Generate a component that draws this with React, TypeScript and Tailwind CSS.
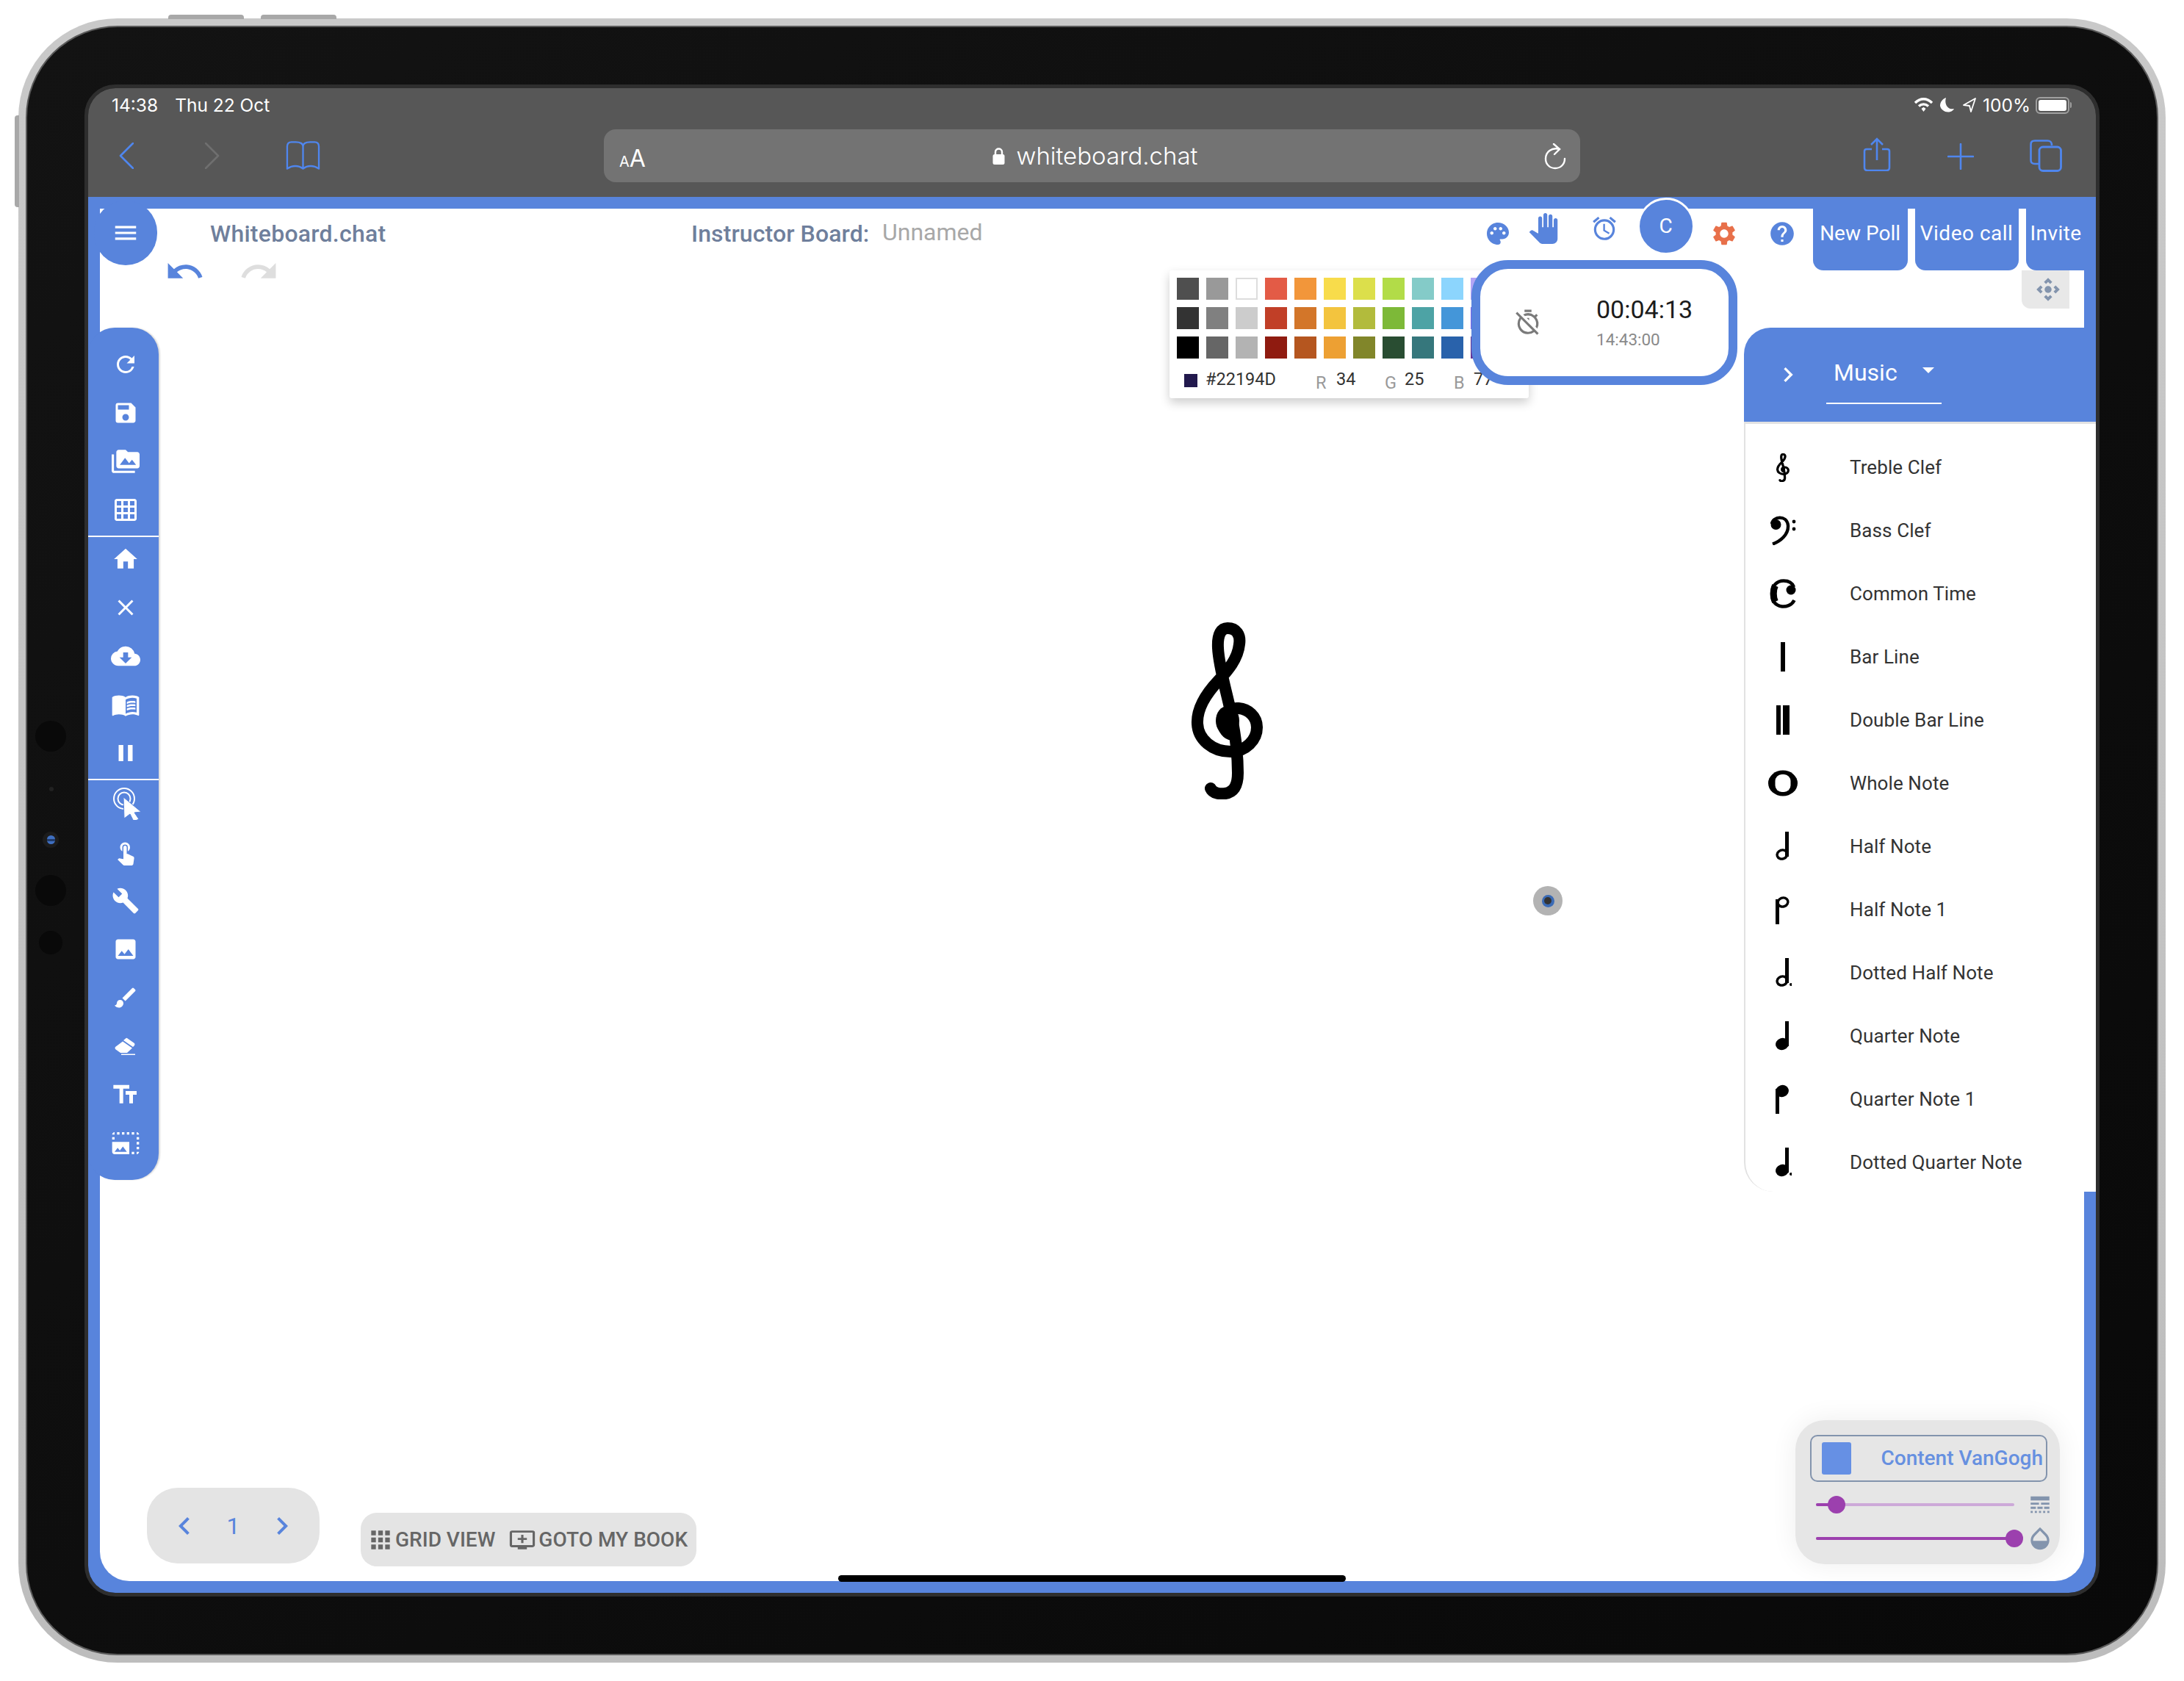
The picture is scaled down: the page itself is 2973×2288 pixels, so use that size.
import {
  MdAddToQueue, MdApps, MdBrush, MdBuild, MdChevronLeft, MdChevronRight, MdClose, MdCloudDownload, MdControlCamera,
  MdFormatSize, MdGridOn, MdHelp, MdHome, MdImage, MdLineStyle, MdMenu, MdMenuBook, MdOpacity, MdOutlineAccessAlarm,
  MdOutlineTimerOff, MdPalette, MdPanTool, MdPause, MdPermMedia, MdPhotoSizeSelectLarge, MdRedo, MdRefresh, MdSave,
  MdSettings, MdTouchApp, MdUndo,
} from "react-icons/md";

const SWATCHES = [
  ["#4f4f4f", "#999999", "#ffffff", "#e35b46", "#f2963a", "#f8dc4b", "#dcdf4b", "#b2dc48", "#84cbc8", "#8cd5fd", "#b3a4f5"],
  ["#333333", "#808080", "#cccccc", "#c13f27", "#d37629", "#f3c43e", "#b2bb3c", "#7db938", "#4da3a5", "#4496d9", "#7b64e8"],
  ["#000000", "#666666", "#b3b3b3", "#8f1b10", "#b5561f", "#eda033", "#81862a", "#294d32", "#36777c", "#2962ab", "#653294"],
];

function TrebleClef({ className, strokeWidth = 16 }: { className: string; strokeWidth?: number }) {
  return (
    <svg viewBox="0 0 99 241" preserveAspectRatio="none" className={className}>
      <path
        d="M27 226 C30 233 40 234 47 233 C60 231 64 220 64 205 C64 180 60 150 55 125 C50 100 38 60 37 35 C36 15 42 8 50 8 C62 8 68 17 66 30 C64 50 50 66 38 79 C20 98 8 118 9 138 C10 160 30 176 54 176 C75 176 90 160 90 143 C90 128 78 118 65 117 C52 116 44 125 44 136 C44 146 50 152 56 153"
        fill="none"
        stroke="#000"
        strokeWidth={strokeWidth}
        strokeLinecap="round"
      />
      <ellipse cx="50" cy="134" rx="16" ry="20" fill="#000" />
    </svg>
  );
}

// note glyphs for the Music list, all on a 40x40 box
function NoteIcon({ name }: { name: string }) {
  switch (name) {
    case "Treble Clef":
      return <TrebleClef className="h-[39px] w-[18px]" strokeWidth={18} />;
    case "Bass Clef":
      return (
        <svg viewBox="0 0 36 40" className="h-[40px] w-[36px]">
          <path d="M3 11 C4 1 23 -2 25 13 C26 26 14 35 4 38.5" fill="none" stroke="#000" strokeWidth="4.4" />
          <circle cx="8.5" cy="12" r="7" fill="#000" />
          <circle cx="33" cy="8" r="2.4" fill="#000" />
          <circle cx="33" cy="18" r="2.4" fill="#000" />
        </svg>
      );
    case "Common Time":
      return (
        <svg viewBox="0 0 36 40" className="h-[40px] w-[36px]">
          <path d="M33.5 29 C30 36 22 38 17 37.5 C7 36 3 29 3 20 C3 10 9 2.5 19 2.5 C26 2.5 31 6 33 11" fill="none" stroke="#000" strokeWidth="4.5" />
          <path d="M7.5 9 C4.5 15 4.5 25 7.5 31" fill="none" stroke="#000" strokeWidth="9" />
          <circle cx="29" cy="15" r="6.5" fill="#000" />
        </svg>
      );
    case "Bar Line":
      return <div className="h-[40px] w-[6px] bg-black" />;
    case "Double Bar Line":
      return (
        <div className="flex h-[40px] gap-[3px]">
          <div className="w-[6px] bg-black" />
          <div className="w-[9px] bg-black" />
        </div>
      );
    case "Whole Note":
      return (
        <svg viewBox="0 0 40 36" className="h-[36px] w-[40px]">
          <ellipse cx="20" cy="18" rx="20" ry="17.5" fill="#000" />
          <rect x="9.5" y="6" width="21" height="24" rx="9" fill="#fff" />
        </svg>
      );
  }
  const filled = name.startsWith("Quarter") || name === "Dotted Quarter Note";
  const flipped = name.endsWith(" 1");
  const dotted = name.startsWith("Dotted");
  if (flipped) {
    return (
      <svg viewBox="0 0 24 40" className="h-[40px] w-[24px]">
        <rect x="2" y="6" width="5" height="34" fill="#000" />
        {filled ? (
          <ellipse cx="11" cy="9" rx="9" ry="8" fill="#000" transform="rotate(-20 11 9)" />
        ) : (
          <ellipse cx="12" cy="10" rx="7" ry="6" fill="none" stroke="#000" strokeWidth="3.4" transform="rotate(-20 12 10)" />
        )}
      </svg>
    );
  }
  return (
    <svg viewBox="0 0 24 40" className="h-[40px] w-[24px]">
      <rect x="15" y="0" width="5" height="34" fill="#000" />
      {filled ? (
        <ellipse cx="11" cy="31" rx="9" ry="8" fill="#000" transform="rotate(-20 11 31)" />
      ) : (
        <ellipse cx="11" cy="31" rx="7" ry="6" fill="none" stroke="#000" strokeWidth="3.4" transform="rotate(-20 11 31)" />
      )}
      {dotted && <circle cx="23" cy="36" r="2" fill="#000" />}
    </svg>
  );
}

function TouchCursor() {
  return (
    <svg viewBox="0 0 40 44" className="h-[44px] w-[40px] translate-x-[3px]">
      <circle cx="15" cy="15" r="14" fill="none" stroke="#fff" strokeWidth="2" />
      <circle cx="15" cy="15" r="8.5" fill="none" stroke="#fff" strokeWidth="2" />
      <path d="M14 13 L38 33 L29 34 L35 43 L28 46 L23 36 L15 42 Z" fill="#fff" stroke="#5884dc" strokeWidth="1" />
    </svg>
  );
}

function EraserIcon() {
  return (
    <svg viewBox="0 0 28 24" className="h-[24px] w-[28px] -translate-x-[1px]">
      <path d="M17 1 L27 8 Q28 9.5 27 11 L25 13 L12 4 L15 1.5 Q16 0.5 17 1 Z" fill="#fff" />
      <path d="M11 5.5 L24 14.5 L17 21 H8 L1 16 Q0 14 1 13 Z" fill="#fff" />
      <rect x="9" y="22.5" width="19" height="1.5" fill="#fff" />
    </svg>
  );
}

function StatusIcons() {
  return (
    <div className="flex items-center text-white">
      <svg viewBox="0 0 27 20" className="mr-[9px] h-[20px] w-[27px]">
        <path d="M2 7 C9 0 18 0 25 7" fill="none" stroke="#fff" strokeWidth="3.4" />
        <path d="M7 11.5 C11 8 16 8 20 11.5" fill="none" stroke="#fff" strokeWidth="3.4" />
        <path d="M10.5 15 L13.5 12.8 L16.5 15 L13.5 19 Z" fill="#fff" />
      </svg>
      <svg viewBox="0 0 19 20" className="mr-[12px] h-[20px] w-[19px]">
        <path d="M8 0 C3 2 0 6 0 11 C1 17 8 21 14 19 C16 18.5 18 17 19 15 C12 17 5 10 8 0 Z" fill="#fff" />
      </svg>
      <svg viewBox="0 0 18 20" className="mr-[9px] h-[20px] w-[18px]">
        <path d="M17 1 L1 10 L9 11 L11 19 Z" fill="none" stroke="#fff" strokeWidth="1.8" strokeLinejoin="round" />
      </svg>
      <span className="mr-[7px] font-['Inter',sans-serif] text-[24.5px] leading-none">100%</span>
      <div className="flex items-center">
        <div className="h-[23px] w-[46px] rounded-[6px] border-2 border-[#a0a0a0] p-[2px]">
          <div className="h-full w-full rounded-[3px] bg-white" />
        </div>
        <div className="ml-[1px] h-[8px] w-[2px] rounded-r bg-[#a0a0a0]" />
      </div>
    </div>
  );
}

function SafariBar() {
  return (
    <div className="h-[148px] shrink-0 bg-[#575757]">
      <div className="flex h-[56px] items-center justify-between pb-[10px] pl-[32px] pr-[33px] font-['Inter',sans-serif] text-[24.5px] text-white">
        <div className="flex gap-[23px]">
          <span>14:38</span>
          <span>Thu 22 Oct</span>
        </div>
        <StatusIcons />
      </div>
      <div className="flex h-[92px] items-start">
        <svg viewBox="0 0 20 36" className="ml-[42px] mt-[18px] h-[36px] w-[20px]">
          <path d="M19 1 L2 18 L19 35" fill="none" stroke="#4f86ee" strokeWidth="2.6" strokeLinecap="round" strokeLinejoin="round" />
        </svg>
        <svg viewBox="0 0 20 36" className="ml-[97px] mt-[18px] h-[36px] w-[20px]">
          <path d="M1 1 L18 18 L1 35" fill="none" stroke="#6f6f6f" strokeWidth="2.6" strokeLinecap="round" strokeLinejoin="round" />
        </svg>
        <svg viewBox="0 0 48 40" className="ml-[90px] mt-[16px] h-[40px] w-[47px]">
          <path
            d="M24 7 C24 3 20 1 14 1 L8 1 C4 1 2 3 2 7 L2 38 C9 33 18 33 24 38 C30 33 39 33 46 38 L46 7 C46 3 44 1 40 1 L34 1 C28 1 24 3 24 7 L24 38"
            fill="none"
            stroke="#4f86ee"
            strokeWidth="2.4"
            strokeLinejoin="round"
          />
        </svg>
        <div className="relative ml-[386px] flex h-[72px] w-[1329px] items-center justify-center rounded-[16px] bg-[#737373] pl-[8px] text-white">
          <div className="absolute left-[21px] top-[24px] flex items-baseline font-['Inter',sans-serif] leading-none">
            <span className="text-[20px]">A</span>
            <span className="text-[32px]">A</span>
          </div>
          <svg viewBox="0 0 17 24" className="mr-[16px] h-[24px] w-[17px]">
            <path d="M4 11 V7 C4 1 13 1 13 7 V11" fill="none" stroke="#fff" strokeWidth="2.4" />
            <rect x="0.5" y="10" width="16" height="14" rx="2.5" fill="#fff" />
          </svg>
          <span className="font-['Inter',sans-serif] text-[33px] font-light leading-none">whiteboard.chat</span>
          <svg viewBox="0 0 30 36" className="absolute right-[19px] top-[19px] h-[36px] w-[30px]">
            <path d="M21 8 C10 5 2 12 2 21 C2 29 8 34 15 34 C22 34 28 29 28 21" fill="none" stroke="#fff" strokeWidth="2.4" strokeLinecap="round" />
            <path d="M13 1 L21 8 L14 15" fill="none" stroke="#fff" strokeWidth="2.4" strokeLinecap="round" />
          </svg>
        </div>
        <svg viewBox="0 0 38 46" className="ml-[385px] mt-[11px] h-[46px] w-[38px]">
          <path d="M12 16 H5 C3 16 2 17 2 19 V41 C2 43 3 45 6 45 H32 C35 45 36 43 36 41 V19 C36 17 35 16 33 16 H26" fill="none" stroke="#4f86ee" strokeWidth="2.6" />
          <path d="M19 2 V31 M11 10 L19 2 L27 10" fill="none" stroke="#4f86ee" strokeWidth="2.6" />
        </svg>
        <svg viewBox="0 0 36 36" className="ml-[77px] mt-[19px] h-[36px] w-[36px]">
          <path d="M18 1 V35 M1 18 H35" stroke="#4f86ee" strokeWidth="2.6" strokeLinecap="round" />
        </svg>
        <svg viewBox="0 0 44 44" className="ml-[76px] mt-[14px] h-[44px] w-[44px]">
          <path d="M12 33 H7 C3 33 1.5 31 1.5 28 V7 C1.5 3 3 1.5 7 1.5 H24 C28 1.5 30 3 30 8" fill="none" stroke="#4f86ee" strokeWidth="2.6" />
          <rect x="13" y="10" width="29.5" height="32.5" rx="5" fill="none" stroke="#4f86ee" strokeWidth="2.8" />
        </svg>
      </div>
    </div>
  );
}

function TopBar() {
  return (
    <div className="flex h-[68px] items-center pl-[150px] font-['Roboto',sans-serif] text-[32px] leading-none">
      <span className="w-[239px] font-medium tracking-[0.25px] text-[#6f7f9c]">Whiteboard.chat</span>
      <span className="ml-[416px] w-[243px] font-medium tracking-[0.1px] text-[#6f7f9c]">Instructor Board:</span>
      <span className="-mt-[4px] ml-[17px] text-[#a8a8a8]">Unnamed</span>
      <div className="ml-[683px] flex items-center text-[#5884dc]">
        <MdPalette size={36} />
        <MdPanTool size={42} className="-mt-[14px] ml-[23px]" />
        <MdOutlineAccessAlarm size={38} className="-mt-[14px] ml-[43px]" />
        <div className="-mt-[20px] ml-[26px] flex h-[78px] w-[78px] items-center justify-center rounded-full border-[3px] border-white bg-[#5884dc] text-[28px] text-white">
          C
        </div>
        <MdSettings size={38} className="ml-[21px] text-[#e8704a]" />
        <MdHelp size={38} className="ml-[41px]" />
      </div>
      <div className="-mr-[17px] -mt-[16px] ml-[23px] flex h-[100px] gap-[10px] self-start text-[28px] text-white">
        <div className="flex w-[129px] items-center justify-center rounded-b-[14px] bg-[#5884dc]">New Poll</div>
        <div className="flex w-[141px] items-center justify-center rounded-b-[14px] bg-[#5884dc] tracking-[0.5px]">Video call</div>
        <div className="flex w-[94px] items-center rounded-b-[14px] bg-[#5884dc] pl-[6px] tracking-[0.4px]">Invite</div>
      </div>
    </div>
  );
}

function Sidebar() {
  const row = "flex h-[40px] items-center justify-center pl-[5px]";
  return (
    <div className="absolute left-0 top-[178px] flex h-[1160px] w-[96px] flex-col rounded-[36px] bg-[#5884dc] text-white shadow-[2px_0_2px_rgba(0,0,0,0.15)]">
      <div className="flex flex-col gap-[26px] pb-[15px] pt-[30px]">
        <div className={row}><MdRefresh size={36} /></div>
        <div className={row}><MdSave size={36} /></div>
        <div className={row}><MdPermMedia size={38} /></div>
        <div className={row}><MdGridOn size={36} /></div>
      </div>
      <div className="h-[2px] bg-white" />
      <div className="flex flex-col gap-[26px] pb-[15px] pt-[10px]">
        <div className={row}><MdHome size={38} /></div>
        <div className={row}><MdClose size={36} /></div>
        <div className={row}><MdCloudDownload size={40} /></div>
        <div className={row}><MdMenuBook size={40} /></div>
        <div className={row}><MdPause size={38} /></div>
      </div>
      <div className="h-[2px] bg-white" />
      <div className="flex flex-col gap-[26px] pt-[12px]">
        <div className={row}><TouchCursor /></div>
        <div className={row}><MdTouchApp size={36} /></div>
        <div className={row}><MdBuild size={38} /></div>
        <div className={row}><MdImage size={36} /></div>
        <div className={row}><MdBrush size={36} /></div>
        <div className={row}><EraserIcon /></div>
        <div className={row}><MdFormatSize size={40} className="-scale-x-100" /></div>
        <div className={row}><MdPhotoSizeSelectLarge size={40} /></div>
      </div>
    </div>
  );
}

function ColorPicker() {
  return (
    <div className="absolute left-[1472px] top-[100px] h-[174px] w-[489px] overflow-hidden rounded-[3px] bg-white pl-[10px] pt-[10px] font-['Roboto',sans-serif] shadow-[0_6px_14px_rgba(0,0,0,0.2)]">
      <div className="flex flex-col gap-[10px]">
        {SWATCHES.map((line, i) => (
          <div key={i} className="flex gap-[10px]">
            {line.map((c) => (
              <div
                key={c}
                className={`h-[30px] w-[30px] shrink-0 ${c === "#ffffff" ? "border-2 border-[#ddd]" : ""}`}
                style={{ backgroundColor: c }}
              />
            ))}
          </div>
        ))}
      </div>
      <div className="mt-[17px] flex h-[30px] items-start pl-[10px] text-[23.5px] leading-none text-[#333]">
        <div className="mt-[4px] h-[18px] w-[18px] bg-[#22194D]" />
        <span className="ml-[11px] w-[150px]">#22194D</span>
        <span className="mt-[5px] w-[28px] text-[#999]">R</span>
        <span className="w-[66px]">34</span>
        <span className="mt-[5px] w-[27px] text-[#999]">G</span>
        <span className="w-[67px]">25</span>
        <span className="mt-[5px] w-[27px] text-[#999]">B</span>
        <span>77</span>
      </div>
    </div>
  );
}

function TimerCard() {
  return (
    <div className="absolute left-[1883px] top-[86px] flex h-[170px] w-[362px] items-center rounded-[50px] border-[12px] border-[#5884dc] bg-white pl-[46px] font-['Roboto',sans-serif]">
      <MdOutlineTimerOff size={38} className="text-[#7a7a7a]" />
      <div className="ml-[74px] flex flex-col">
        <span className="text-[34px] leading-none text-[#1c1c1c]">00:04:13</span>
        <span className="mt-[13px] text-[22.5px] leading-none text-[#8a8a8a]">14:43:00</span>
      </div>
    </div>
  );
}

const NOTES = [
  "Treble Clef", "Bass Clef", "Common Time", "Bar Line", "Double Bar Line", "Whole Note",
  "Half Note", "Half Note 1", "Dotted Half Note", "Quarter Note", "Quarter Note 1", "Dotted Quarter Note",
];

function MusicPanel() {
  return (
    <div className="absolute left-[2254px] top-[178px] flex h-[1176px] w-[479px] flex-col font-['Roboto',sans-serif]">
      <div className="relative h-[128px] shrink-0 rounded-tl-[36px] bg-[#5884dc] text-white">
        <MdChevronRight size={40} className="absolute left-[40px] top-[44px]" />
        <div className="absolute left-[112px] top-0 h-[104px] w-[157px] border-b-2 border-white">
          <span className="absolute left-[10px] top-[45px] text-[32px] leading-none">Music</span>
          <div className="absolute left-[131px] top-[54px] h-0 w-0 border-x-[8px] border-t-[8px] border-x-transparent border-t-white" />
        </div>
      </div>
      <div className="flex-1 overflow-hidden rounded-bl-[40px] border-l-2 border-t-[3px] border-[#e2e2e2] bg-white pt-[16px]">
        {NOTES.map((n) => (
          <div key={n} className="flex h-[86px] items-center">
            <div className="flex w-[102px] shrink-0 justify-center">
              <NoteIcon name={n} />
            </div>
            <span className="ml-[40px] text-[26px] leading-none tracking-[0.1px] text-[#333]">{n}</span>
          </div>
        ))}
      </div>
    </div>
  );
}

function Pager() {
  return (
    <div className="absolute left-[80px] top-[1757px] flex h-[103px] w-[235px] items-center justify-between rounded-[42px] bg-[#e4e4e4] px-[27px] font-['Roboto',sans-serif] text-[#5884dc]">
      <MdChevronLeft size={48} />
      <span className="text-[32px] leading-none">1</span>
      <MdChevronRight size={48} />
    </div>
  );
}

function GridBar() {
  return (
    <div className="absolute left-[371px] top-[1791px] flex h-[73px] w-[457px] items-center rounded-[22px] bg-[#e4e4e4] pl-[8px] font-['Roboto',sans-serif] text-[28px] font-medium leading-none text-[#666]">
      <MdApps size={38} />
      <span className="ml-[1px]">GRID VIEW</span>
      <MdAddToQueue size={34} className="ml-[20px] scale-x-110" />
      <span className="ml-[5px] whitespace-nowrap">GOTO MY BOOK</span>
    </div>
  );
}

function Slider({ value }: { value: number }) {
  return (
    <div className="relative h-[24px] w-[270px]">
      <div className="absolute left-0 right-0 top-[10px] h-[4px] rounded-full bg-[#cda9d8]" />
      <div className="absolute left-0 top-[10px] h-[4px] rounded-full bg-[#9c40ae]" style={{ width: value }} />
      <div className="absolute top-0 h-[24px] w-[24px] -translate-x-1/2 rounded-full bg-[#9c40ae]" style={{ left: value }} />
    </div>
  );
}

function LayerCard() {
  return (
    <div className="absolute left-[2324px] top-[1665px] h-[196px] w-[360px] rounded-[40px] bg-[#e6e6e6] pl-[20px] pt-[20px] font-['Roboto',sans-serif] shadow-[0_0_36px_rgba(0,0,0,0.07)]">
      <div className="flex h-[64px] w-[323px] items-center justify-between rounded-[10px] border-2 border-[#8394ad] pl-[14px] pr-[4px]">
        <div className="h-[44px] w-[40px] rounded-[3px] bg-[#6690e4]" />
        <span className="text-[28px] font-medium leading-none text-[#6690e0]">Content VanGogh</span>
      </div>
      <div className="ml-[8px] mt-[19px] flex h-[24px] items-center">
        <Slider value={28} />
        <MdLineStyle size={34} className="ml-[18px] text-[#8394ad]" />
      </div>
      <div className="ml-[8px] mt-[22px] flex h-[24px] items-center">
        <Slider value={270} />
        <MdOpacity size={38} className="ml-[16px] text-[#8394ad]" />
      </div>
    </div>
  );
}

function Whiteboard() {
  return (
    <div className="relative flex-1 bg-[#5884dc] px-[16px] pt-[16px]">
      <div className="h-[1868px] rounded-b-[40px] bg-white">
        <TopBar />
      </div>
      {/* hamburger blob merges into the blue frame */}
      <div className="absolute left-[8px] top-[5px] flex h-[88px] w-[86px] items-center justify-center rounded-full bg-[#5884dc] text-white">
        <MdMenu size={38} />
      </div>
      <MdUndo size={55} className="absolute left-[104px] top-[74px] text-[#5884dc]" />
      <MdRedo size={55} className="absolute left-[205px] top-[74px] text-[#dedede]" />
      <Sidebar />
      <ColorPicker />
      <TimerCard />
      <div className="absolute left-[2632px] top-[100px] flex h-[52px] w-[65px] items-center justify-center rounded-bl-[12px] bg-[#e8e8e8] pl-[6px] text-[#8394ad]">
        <MdControlCamera size={38} />
      </div>
      <MusicPanel />
      {/* things drawn on the board */}
      <TrebleClef className="absolute left-[1501px] top-[579px] h-[241px] w-[99px]" />
      <div className="absolute left-[1967px] top-[938px] flex h-[40px] w-[40px] items-center justify-center rounded-full bg-[#b3b3b3]">
        <div className="flex h-[17px] w-[17px] items-center justify-center rounded-full bg-[#3b6bb5]">
          <div className="h-[10px] w-[10px] rounded-full bg-[#333]" />
        </div>
      </div>
      <Pager />
      <GridBar />
      <LayerCard />
      <div className="absolute bottom-[15px] left-[1021px] h-[9px] w-[691px] rounded-full bg-black" />
    </div>
  );
}

export default function App() {
  return (
    <div className="relative h-[2288px] w-[2973px] overflow-hidden bg-white pl-[25px] pt-[25px]">
      {/* side buttons */}
      <div className="absolute left-[229px] top-[20px] h-[6px] w-[103px] rounded-t bg-[#a8a8a8]" />
      <div className="absolute left-[355px] top-[20px] h-[6px] w-[103px] rounded-t bg-[#a8a8a8]" />
      <div className="absolute left-[20px] top-[157px] h-[125px] w-[6px] rounded-l bg-[#a8a8a8]" />

      <div className="h-[2238px] w-[2923px] rounded-[135px] bg-gradient-to-b from-[#c9c9c9] to-[#bdbdbd] p-[10px]">
        <div className="relative h-full w-full rounded-[125px] border-2 border-[#5a5a5a] bg-gradient-to-br from-[#131313] to-[#090909] p-[78px]">
          {/* camera and sensors */}
          <div className="absolute left-[11px] top-[944px] h-[42px] w-[42px] rounded-full bg-[#090909]" />
          <div className="absolute left-[30px] top-[1034px] h-[6px] w-[6px] rounded-full bg-[#222]" />
          <div className="absolute left-[21px] top-[1095px] flex h-[22px] w-[22px] items-center justify-center rounded-full bg-[#1c1c1c]">
            <div className="flex h-[12px] w-[11px] items-center overflow-hidden rounded-full bg-[#3f6fc0]">
              <div className="h-[3px] w-full bg-[#1f3a6a]" />
            </div>
          </div>
          <div className="absolute left-[11px] top-[1154px] h-[42px] w-[42px] rounded-full bg-[#090909]" />
          <div className="absolute left-[16px] top-[1230px] h-[32px] w-[32px] rounded-full bg-[#090909]" />

          <div className="flex h-full w-full flex-col overflow-hidden rounded-[42px] border-[5px] border-[#2e2e2e]">
            <SafariBar />
            <Whiteboard />
          </div>
        </div>
      </div>
    </div>
  );
}
